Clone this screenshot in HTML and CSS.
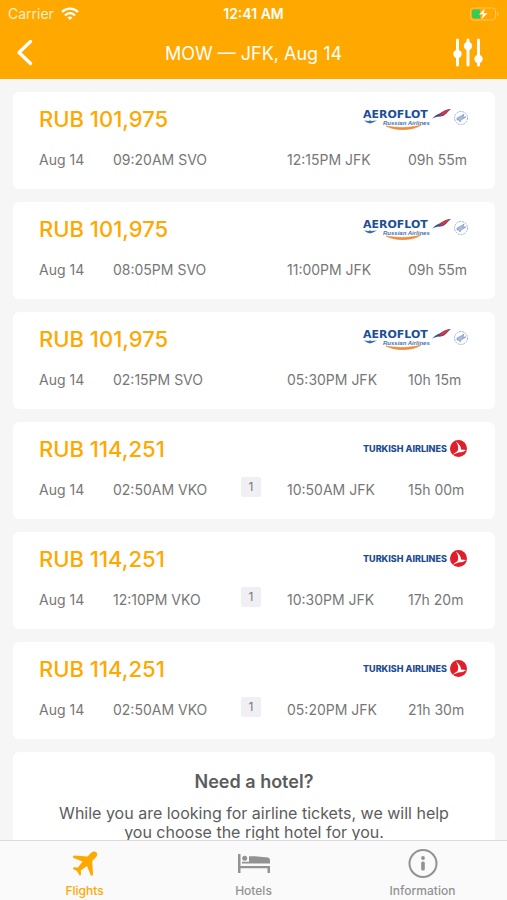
FILE: index.html
```html
<!DOCTYPE html>
<html lang="en">
  <head>
    <meta charset="utf-8">
    <title>MOW — JFK, Aug 14</title>
    <meta name="viewport" content="width=device-width, initial-scale=1">
    <link rel="stylesheet" href="styles.css">
  </head>
  <body>
    <!-- airline marks, reused by the cards -->
    <svg class="sprite" aria-hidden="true">
      <symbol id="aeroflot" viewBox="0 0 106 24">
        <path d="M69 12C72 8 76 7 79 5C82 3 85 2 88 2C85 4 84 7 80 9C76 10 73 9 69 12Z" fill="#24509a"/>
        <path d="M75 9C78 5 82 3 88 2C84 4 83 7 80 8L76 10L79 6Z" fill="#e0343d"/>
        <path d="M1 13.500L6 14L7 13L8 14L14 13.500L10 15.500L7 16.500L4 15.500Z" fill="#3a70b0"/>
        <path d="M23 19C32 24 50 24 58 18C49 21 33 21 23 19Z" fill="#f08a3c" stroke="#f08a3c" stroke-width=".6"/>
        <circle cx="98" cy="11" r="6.500" fill="none" stroke="#9fb3d2" stroke-dasharray="2 .8"/>
        <path d="M94 11L98 9L101 7L100 10L103 10L98 13L97 15L96 13L94 13Z" fill="#a9bcd9" stroke="#7391bf" stroke-width=".6"/>
      </symbol>
      <symbol id="turkish" viewBox="0 0 106 24">
        <circle cx="95.500" cy="11.500" r="8.500" fill="#e01f2b"/>
        <path d="M93 4.500C96 7 98 9 98 12.500L103 13C100 15.500 98 15 95.500 15.500L89 18C92 16 94.500 14.500 95 13C95.500 10 95 7.500 93 4.500Z" fill="#fff"/>
      </symbol>
    </svg>

    <header class="header">
      <div class="status">
        <div class="carrier">
          Carrier
          <svg width="18" height="14" viewBox="0 0 18 14" fill="none" stroke="#fff" stroke-width="2.400">
            <path d="M1 5C5.500 .5 12.500 .5 17 5M4 8.500C7 5.500 11 5.500 14 8.500"/>
            <path d="M6.500 10.500C8 9.300 10 9.300 11.500 10.500L9 13Z" fill="#fff" stroke="none"/>
          </svg>
        </div>
        <time class="clock">12:41 AM</time>
        <svg class="battery" width="30" height="14" viewBox="0 0 30 14">
          <rect x="1.500" y="1" width="25" height="12" rx="3" fill="none" stroke="#ffc55c"/>
          <path d="M28 5V9C30 8.500 30 5.500 28 5Z" fill="#ffc55c"/>
          <path d="M5 2.500H11V11.500H5Q3 11.500 3 9.500V4.500Q3 2.500 5 2.500Z" fill="#35cd55"/>
          <path d="M16 1L10 7.500H13.500L12 13L19 6H15Z" fill="#fff" stroke="#ffa800" stroke-width=".5"/>
        </svg>
      </div>
      <div class="titlebar">
        <button class="icon-btn" type="button" aria-label="Back">
          <svg width="18" height="28" viewBox="0 0 18 28" fill="none" stroke="#fff" stroke-width="3.400" stroke-linecap="round" stroke-linejoin="round">
            <path d="M14.500 2.500L3 13.500L14.500 24.500"/>
          </svg>
        </button>
        <h1 class="title">MOW — JFK, Aug 14</h1>
        <button class="icon-btn icon-btn-right" type="button" aria-label="Filters">
          <svg width="30" height="30" viewBox="0 0 30 30" fill="#fff" stroke="#fff" stroke-width="3" stroke-linecap="round">
            <path d="M4.500 2V27M15 2V27M25.500 2V27"/>
            <circle cx="4.500" cy="16" r="2.700"/>
            <circle cx="15" cy="8" r="2.700"/>
            <circle cx="25.500" cy="21" r="2.700"/>
          </svg>
        </button>
      </div>
    </header>

    <main class="results">
      <article class="card">
        <div class="card-top">
          <h2 class="price">RUB 101,975</h2>
          <svg class="logo" viewBox="0 0 106 24">
            <text class="aeroflot-name" x="0" y="11">AEROFLOT</text>
            <text class="aeroflot-sub" x="20" y="18">Russian Airlines</text>
            <use href="#aeroflot"/>
          </svg>
        </div>
        <div class="route">
          <span>Aug 14</span><span>09:20AM SVO</span><span></span><span>12:15PM JFK</span><span>09h 55m</span>
        </div>
      </article>
      <article class="card">
        <div class="card-top">
          <h2 class="price">RUB 101,975</h2>
          <svg class="logo" viewBox="0 0 106 24">
            <text class="aeroflot-name" x="0" y="11">AEROFLOT</text>
            <text class="aeroflot-sub" x="20" y="18">Russian Airlines</text>
            <use href="#aeroflot"/>
          </svg>
        </div>
        <div class="route">
          <span>Aug 14</span><span>08:05PM SVO</span><span></span><span>11:00PM JFK</span><span>09h 55m</span>
        </div>
      </article>
      <article class="card">
        <div class="card-top">
          <h2 class="price">RUB 101,975</h2>
          <svg class="logo" viewBox="0 0 106 24">
            <text class="aeroflot-name" x="0" y="11">AEROFLOT</text>
            <text class="aeroflot-sub" x="20" y="18">Russian Airlines</text>
            <use href="#aeroflot"/>
          </svg>
        </div>
        <div class="route">
          <span>Aug 14</span><span>02:15PM SVO</span><span></span><span>05:30PM JFK</span><span>10h 15m</span>
        </div>
      </article>
      <article class="card">
        <div class="card-top">
          <h2 class="price">RUB 114,251</h2>
          <svg class="logo" viewBox="0 0 106 24">
            <text class="turkish-name" x="0" y="15">TURKISH AIRLINES</text>
            <use href="#turkish"/>
          </svg>
        </div>
        <div class="route">
          <span>Aug 14</span><span>02:50AM VKO</span><span class="stops">1</span><span>10:50AM JFK</span><span>15h 00m</span>
        </div>
      </article>
      <article class="card">
        <div class="card-top">
          <h2 class="price">RUB 114,251</h2>
          <svg class="logo" viewBox="0 0 106 24">
            <text class="turkish-name" x="0" y="15">TURKISH AIRLINES</text>
            <use href="#turkish"/>
          </svg>
        </div>
        <div class="route">
          <span>Aug 14</span><span>12:10PM VKO</span><span class="stops">1</span><span>10:30PM JFK</span><span>17h 20m</span>
        </div>
      </article>
      <article class="card">
        <div class="card-top">
          <h2 class="price">RUB 114,251</h2>
          <svg class="logo" viewBox="0 0 106 24">
            <text class="turkish-name" x="0" y="15">TURKISH AIRLINES</text>
            <use href="#turkish"/>
          </svg>
        </div>
        <div class="route">
          <span>Aug 14</span><span>02:50AM VKO</span><span class="stops">1</span><span>05:20PM JFK</span><span>21h 30m</span>
        </div>
      </article>
      <section class="card hotel">
        <h2 class="hotel-title">Need a hotel?</h2>
        <p class="hotel-text">While you are looking for airline tickets, we will help you choose the right hotel for you.</p>
      </section>
    </main>

    <nav class="tabs">
      <a class="tab active" href="#flights">
        <svg width="30" height="30" viewBox="0 0 30 30" fill="currentColor">
          <path d="M26.500 3.500C25 2 22.500 2.500 21 4L17.500 7.500L4 6.500Q2.500 7.500 3 8.800L12.500 12.500L8 18.500L4 18.300Q2.800 19 3 20L7 22L9.500 26.500Q11 26.500 11 25.500L10.800 21.500L17 17L21 26.800Q23 26.800 23 25.500L22.200 12L25.700 8.500C27.200 7 28 5 26.500 3.500Z"/>
        </svg>
        Flights
      </a>
      <a class="tab" href="#hotels">
        <svg width="34" height="30" viewBox="0 0 34 30" fill="currentColor">
          <path d="M1 5H3.500V17H33V24H30.500V19.200H3.500V24H1Z"/>
          <path d="M12 7.200H18L31 8.500Q33 9 33 11V14.500H12ZM5 12.800H12V14.500H5Z"/>
          <circle cx="7.700" cy="9.300" r="2.500"/>
        </svg>
        Hotels
      </a>
      <a class="tab" href="#information">
        <svg width="30" height="30" viewBox="0 0 30 30" fill="currentColor">
          <circle cx="15" cy="14.500" r="13.500" fill="none" stroke="currentColor" stroke-width="2"/>
          <circle cx="15" cy="9" r="1.900"/>
          <rect x="13.200" y="12.500" width="3.600" height="9" rx="1.500"/>
        </svg>
        Information
      </a>
    </nav>
  </body>
</html>
```
FILE: styles.css
```css
* {
  box-sizing: border-box;
}

body {
  display: flex;
  flex-direction: column;
  height: 100vh;
  margin: 0;
  overflow: hidden;
  background: #f6f6f6;
  color: #777;
  font-family: Inter, "Liberation Sans", sans-serif;
  font-size: 14px;
}

h1, h2, p {
  margin: 0;
}

.sprite {
  position: absolute;
  width: 0;
  height: 0;
}

.header {
  flex: none;
  background: #ffa800;
  color: #fff;
}

.status {
  display: grid;
  grid-template-columns: 1fr auto 1fr;
  align-items: center;
  height: 27px;
  padding: 0 8px;
}

.carrier {
  display: flex;
  align-items: center;
  gap: 7px;
  color: #ffedc8;
}

.clock {
  font-size: 14px;
  font-weight: 600;
}

.battery {
  justify-self: end;
}

.titlebar {
  display: grid;
  grid-template-columns: 60px 1fr 60px;
  align-items: center;
  height: 52px;
  padding: 0 16px;
}

.icon-btn {
  display: flex;
  padding: 0;
  border: none;
  background: none;
  cursor: pointer;
}

.icon-btn-right {
  justify-content: flex-end;
  padding-right: 8px;
}

.title {
  text-align: center;
  font-size: 18px;
  font-weight: 400;
}

.results {
  display: flex;
  flex: 1;
  flex-direction: column;
  gap: 13px;
  min-height: 0;
  padding: 13px 12px 0 13px;
  overflow: hidden;
}

.card {
  flex: none;
  padding: 13px 26px 20px;
  border-radius: 6px;
  background: #fff;
}

.card-top {
  display: flex;
  align-items: center;
  justify-content: space-between;
  height: 27px;
  margin-bottom: 17px;
}

.price {
  color: #ffa800;
  font-size: 22px;
  font-weight: 500;
}

.logo {
  width: 106px;
  height: 24px;
}

.aeroflot-name {
  fill: #1c4f97;
  font-family: "DejaVu Sans", sans-serif;
  font-size: 11px;
  font-weight: 700;
}

.aeroflot-sub {
  fill: #4674af;
  font-family: "Liberation Sans", sans-serif;
  font-size: 6px;
  font-style: italic;
  font-weight: 700;
}

.turkish-name {
  fill: #1c4c94;
  font-family: Inter, sans-serif;
  font-size: 9px;
  font-weight: 800;
}

.route {
  display: grid;
  grid-template-columns: 74fr 128fr 46fr 121fr 61fr;
  align-items: center;
  height: 20px;
  white-space: nowrap;
}

.stops {
  width: 20px;
  margin-top: -4px;
  border-radius: 2px;
  background: #f0f0f4;
  font-size: 12px;
  line-height: 20px;
  text-align: center;
}

.hotel {
  padding: 19px 40px;
  color: #5c5c5c;
  text-align: center;
}

.hotel-title {
  margin-bottom: 11px;
  font-size: 18px;
  font-weight: 600;
  line-height: 22px;
}

.hotel-text {
  font-size: 16px;
  line-height: 19px;
}

.tabs {
  display: flex;
  flex: none;
  height: 60px;
  border-top: 1px solid #dcdcdc;
  background: #fafafa;
}

.tab {
  display: flex;
  flex: 1;
  flex-direction: column;
  align-items: center;
  gap: 4px;
  padding-top: 8px;
  color: #929292;
  font-size: 12px;
  font-weight: 500;
  text-decoration: none;
}

.tab.active {
  color: #ffa800;
}
```
